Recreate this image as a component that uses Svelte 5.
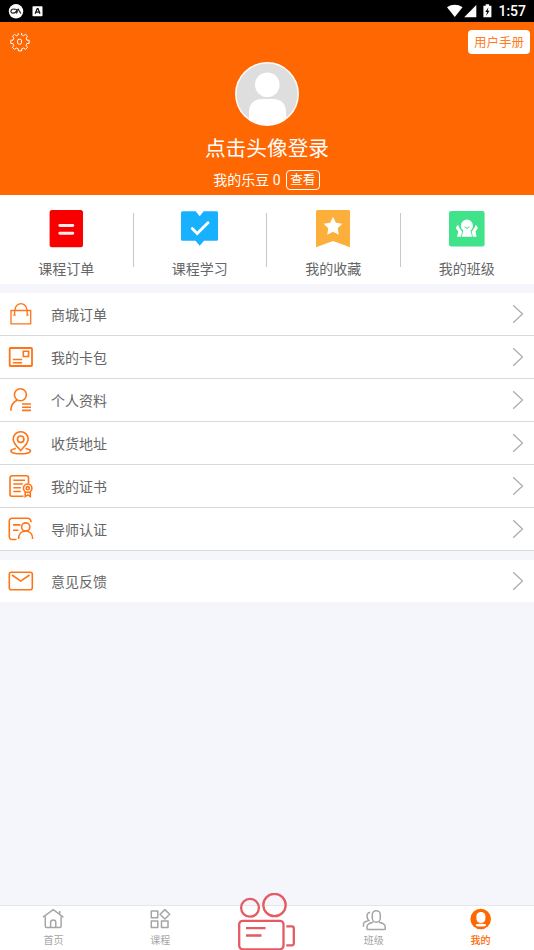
<script lang="ts">
	const shortcuts = [
		{ icon: 'order', label: '课程订单' },
		{ icon: 'study', label: '课程学习' },
		{ icon: 'favorite', label: '我的收藏' },
		{ icon: 'group', label: '我的班级' }
	];

	const sections = [
		[
			{ icon: 'bag', label: '商城订单' },
			{ icon: 'card', label: '我的卡包' },
			{ icon: 'profile', label: '个人资料' },
			{ icon: 'pin', label: '收货地址' },
			{ icon: 'certificate', label: '我的证书' },
			{ icon: 'teacher', label: '导师认证' }
		],
		[{ icon: 'mail', label: '意见反馈' }]
	];

	const tabs = [
		{ icon: 'home', label: '首页' },
		{ icon: 'course', label: '课程' },
		{ icon: 'camera', label: '' },
		{ icon: 'class', label: '班级' },
		{ icon: 'mine', label: '我的' }
	];

	let activeTab = $state('mine');
</script>

<div class="screen">
	<div class="statusbar">
		<svg width="36" height="16" viewBox="0 0 36 16">
			<circle cx="8" cy="8.3" r="7.2" fill="#fff" />
			<path d="M7 6.4C4.5 5.3 2.7 6.8 2.9 8.5c.2 1.9 2.8 2.2 4.5.7l2.8-3 2.7 4.3M7.2 6.4c2.2-.6 3 3.7.7 3.7" fill="none" stroke="#222" stroke-width="1.2" />
			<rect x="24.5" y="3.3" width="10" height="10" rx=".7" fill="#fff" />
			<path d="M27.2 10.8l2-5.2h.8l2 5.2M28 9.1h3.1" fill="none" stroke="#111" stroke-width="1.3" />
		</svg>
		<div class="status_right">
			<svg width="46" height="16" viewBox="0 0 46 16">
				<path d="M0 4.3C4.6 1 10.9 1 15.500 4.300L7.800 14z" fill="#fff" />
				<path d="M29.300 2v12.200H17.200z" fill="#fff" />
				<path d="M38.700 1.300h3.400v1.400h2.300v11.600h-8V2.700h2.300z" fill="#fff" />
				<path d="M41.500 4.200l-3.200 4.700h1.800l-1 4 3.400-5.100h-1.900l.9-3.600z" fill="#000" />
			</svg>
			<span>1:57</span>
		</div>
	</div>

	<header>
		<div class="header_top">
			<svg width="20" height="20" viewBox="0 0 20 20" fill="none" stroke="#fff" stroke-width="1">
				<path d="M8.300 1v1.900l-2 .9-1.800-1.500-2 2 1.400 1.900-.9 2H.8v3.300h2.100l1 2.100-1.400 1.800 2 2 1.800-1.400 2 .9v2h3.300v-2l2-.9 1.800 1.400 2.100-2-1.400-1.800.8-2.100h2.200V8.200h-2.200l-.8-2 1.400-1.900-2.100-2-1.800 1.500-2-.9V1" />
				<rect x="7.500" y="7.200" width="4" height="5" rx="1.600" />
			</svg>
			<button class="manual">用户手册</button>
		</div>
		<svg width="64" height="64" viewBox="0 0 64 64">
			<clipPath id="avatar-clip"><circle cx="32" cy="32" r="31" /></clipPath>
			<circle cx="32" cy="32" r="31" fill="#dedede" />
			<g clip-path="url(#avatar-clip)" fill="#fff">
				<circle cx="32.300" cy="22.700" r="12.300" />
				<path d="M14 64V50c0-8 5-13 13-13h11c8 0 13 5 13 13v14z" />
			</g>
			<circle cx="32" cy="32" r="31.200" fill="none" stroke="#fff" stroke-width="1.500" />
		</svg>
		<div class="login">点击头像登录</div>
		<div class="beans">
			<span>我的乐豆 0</span>
			<button class="view">查看</button>
		</div>
	</header>

	<div class="shortcuts">
		{#each shortcuts as item}
			<div class="shortcut">
				<svg width="38" height="38" viewBox="0 0 38 38">
					{#if item.icon === 'order'}
						<rect x="1.600" y="0" width="33.400" height="37.300" rx="2.500" fill="#f80000" />
						<path d="M11.800 15.500h13M11.800 23.200h13" stroke="#ffe9e9" stroke-width="2.900" stroke-linecap="round" />
					{:else if item.icon === 'study'}
						<path d="M2 1.300h12.700l4 5 4-5h13.100q1.200 0 1.200 1.500v26.400q0 1.600-1.400 1.600H23l-4.300 5-4.200-5H1.400Q0 30.800 0 29.200V2.800Q0 1.300 2 1.300z" fill="#18b1ff" />
						<path d="M11.200 18.500l5 5L27 12.700" fill="none" stroke="#fff" stroke-width="2.900" stroke-linecap="round" />
					{:else if item.icon === 'favorite'}
						<path d="M2.600 0h30.800q1.600 0 1.600 1.600v35.700L18 31 1 37.300V1.600Q1 0 2.600 0z" fill="#fdaf3b" />
						<path d="M18 6.800l2.900 6 6.400.9-4.600 4.600 1.100 6.500-5.800-3-5.800 3 1.100-6.500-4.600-4.600 6.400-.9z" fill="#fff" />
					{:else}
						<rect x="1" y="1" width="35.600" height="35.400" rx="2.200" fill="#40e28a" />
						<path d="M10.300 15c-2.300 1-3 3.700-1.100 5 1.600 1.100.9 3-.2 6.800h4l1.100-5.300c-1.900-2-2.900-3.700-3.800-6.500zM27.500 15c2.300 1 3 3.700 1.100 5-1.600 1.100-.9 3 .2 6.800h-4l-1.100-5.300c1.900-2 2.900-3.700 3.800-6.500z" fill="#fff" />
						<path d="M15.200 20.500h7.400l1.500 6.300H13.800z" fill="#fff" />
						<circle cx="18.900" cy="15.700" r="6.100" fill="#fff" />
						<path d="M16.900 17q2 2.400 4 0" fill="none" stroke="#40e28a" stroke-width="1.100" stroke-linecap="round" />
					{/if}
				</svg>
				<span>{item.label}</span>
			</div>
		{/each}
	</div>

	{#each sections as rows}
		<div class="section">
			{#each rows as row}
				<div class="row">
					<svg class="row_icon" width="26" height="26" viewBox="0 0 26 26">
						{#if row.icon === 'bag'}
							<path d="M3 9.500h19.700v13.300H3zM6.500 13.500C6.500 6.500 8.500 2.700 12.900 2.700s6.500 3.800 6.500 10.800" stroke-width="1.300" />
							<path d="M5.400 14h2.200M18.300 14h2.200" />
						{:else if row.icon === 'card'}
							<rect x="1.700" y="4" width="22.300" height="18" rx=".7" stroke-width="1.800" />
							<path d="M15.300 7.300h5.200v5.200h-5.200zM4.800 15.500h9.300M4.800 18.700h9.300" />
						{:else if row.icon === 'profile'}
							<circle cx="12.400" cy="7.700" r="6" />
							<path d="M9.200 13.200C5.600 14.700 3 18.500 2.800 23.800M14 17h9M14 20.200h9M14 23.400h9" />
						{:else if row.icon === 'pin'}
							<path d="M12.700 20.500C9 16.500 5.200 13.200 5.200 9.200a7.500 7.500 0 0 1 15 0c0 4-3.800 7.300-7.500 11.300z" />
							<circle cx="12.700" cy="9.200" r="3.200" />
							<path d="M7.800 18.500C-.2 20 1.800 23.800 12.700 23.800s12.900-3.800 4.900-5.300" />
						{:else if row.icon === 'certificate'}
							<path d="M15.500 23.300H4a2 2 0 0 1-2-2V4.800a2 2 0 0 1 2-2h14.500a2 2 0 0 1 2 2v5.500M5.300 7.200H17M5.300 11h9.500M5.300 14.800h7.500M5.300 18.500h7.500" />
							<circle cx="19.700" cy="15.200" r="4.200" />
							<circle cx="19.700" cy="15.200" r="1.600" />
							<path d="M17.200 18.900v4.700l2.600-1.700 2.500 1.700v-4.700" />
						{:else if row.icon === 'teacher'}
							<path d="M8.500 23.500H4a2.700 2.700 0 0 1-2.700-2.700V5A2.700 2.700 0 0 1 4 2.300h15.500c2.300 0 3.400 1.500 3.600 4M5 8.900h7.500M5 14.300h5.500M10.600 23c0-4.500 2.500-8 7-8s7 3.500 7.100 8" />
							<circle cx="17.700" cy="11" r="4.100" />
						{:else}
							<rect x="1.300" y="4.200" width="23" height="17.500" rx="2" />
							<path d="M4 7l8.700 6.100L21.500 7" />
						{/if}
					</svg>
					<span>{row.label}</span>
					<svg class="chevron" width="12" height="20" viewBox="0 0 12 20">
						<path d="M1.200 1.200l9.300 8.800-9.300 8.800" />
					</svg>
				</div>
			{/each}
		</div>
	{/each}

	<nav>
		{#each tabs as tab}
			<button class="tab" class:active={activeTab === tab.icon} onclick={() => (activeTab = tab.icon)}>
				{#if tab.icon === 'camera'}
					<svg class="camera" width="58" height="58" viewBox="0 0 58 58">
						<circle cx="12" cy="14.800" r="8.900" />
						<circle cx="36.500" cy="12" r="11.200" />
						<rect x="1.200" y="27.800" width="44.300" height="28.500" rx="3.500" />
						<path d="M8 35.200h19.500M8 42.500h15.500M48.300 33.300h5.500q2 0 2 2v15q0 2-2 2h-5.500" />
					</svg>
				{:else}
					<svg width="26" height="24" viewBox="0 0 26 24">
						{#if tab.icon === 'home'}
							<path d="M3 10.200L13.200 2.600l10.200 7.600M5.300 9.500v9.700q0 1.300 1.300 1.300h13.200q1.300 0 1.300-1.300V9.500M19.700 4v3.500M10.600 20.200v-4.700a2.600 2.600 0 0 1 5.200 0v4.700" />
						{:else if tab.icon === 'course'}
							<path d="M4.300 4h6.500v6.700H4.300zM4.300 14h6.500v6.500H4.300zM14.500 14H21v6.500h-6.500zM17.900 2.600l4.800 4.700-4.800 4.700-4.800-4.700z" stroke-linejoin="round" />
						{:else if tab.icon === 'class'}
							<rect x="11.300" y="3.700" width="8" height="11.500" rx="4" />
							<path d="M12.300 15.200c-3.800.8-6.300 2.400-6.300 4.500v2q0 .9.900.9h16.400q.9 0 .9-.9v-2c0-2.100-2.500-3.700-6.300-4.500M9.200 5.200C6.300 5.500 5.800 8 6.200 10.300c.2 1.600.9 2.500 1.600 3.200-3 .8-5.300 1.600-5.300 3.500v2.700" />
						{:else}
							<circle class="mine_disc" cx="12.700" cy="12" r="10.300" />
							<rect class="mine_person" x="8.400" y="5" width="9" height="11" rx="4.200" />
							<ellipse class="mine_person" cx="12.900" cy="18.200" rx="5.200" ry="1.400" />
						{/if}
					</svg>
					<span>{tab.label}</span>
				{/if}
			</button>
		{/each}
	</nav>
</div>

<style>
	:global(body) {
		margin: 0;
	}

	.screen {
		display: flex;
		flex-direction: column;
		height: 950px;
		overflow: hidden;
		background: #f5f6fb;
		color: #666;
		font-family: Roboto, 'Noto Sans CJK SC', sans-serif;
		font-size: 14px;
	}

	svg {
		display: block;
		flex-shrink: 0;
	}

	button {
		padding: 0;
		border: none;
		background: none;
		font-family: inherit;
	}

	.statusbar {
		display: flex;
		justify-content: space-between;
		align-items: center;
		height: 22px;
		padding: 0 8px;
		background: #000;
		color: #fff;
	}

	.status_right {
		display: flex;
		align-items: center;
		gap: 5px;
		font-size: 14px;
		font-weight: 500;
	}

	header {
		display: flex;
		flex-direction: column;
		align-items: center;
		height: 173px;
		background: #ff6702;
		color: #fff;
	}

	.header_top {
		display: flex;
		justify-content: space-between;
		align-self: stretch;
		height: 31.5px;
		padding: 8px 4px 0 10px;
	}

	.header_top svg {
		margin-top: 2px;
	}

	.manual {
		width: 62px;
		height: 24px;
		border-radius: 4px;
		background: #fff;
		color: #ff7d26;
		font-size: 12.5px;
		line-height: 25px;
	}

	.login {
		margin-top: 8.5px;
		font-size: 20.7px;
		line-height: 30px;
	}

	.beans {
		display: flex;
		align-items: center;
		gap: 5px;
		margin-top: 6px;
		padding-right: 1px;
		line-height: 20px;
	}

	.view {
		box-sizing: border-box;
		width: 34px;
		height: 20px;
		border: 1px solid #fff;
		border-radius: 4px;
		color: #fff;
		font-size: 12.5px;
		line-height: 18px;
	}

	.shortcuts {
		display: flex;
		height: 89px;
		background: #fff;
	}

	.shortcut {
		display: flex;
		flex: 1;
		flex-direction: column;
		align-items: center;
		padding-top: 15px;
		background: linear-gradient(#c8c8c8, #c8c8c8) no-repeat right 18px / 1px 54px;
	}

	.shortcut:last-child {
		background: none;
	}

	.shortcut span {
		margin: 11px 1px 0 0;
		line-height: 20px;
	}

	.section {
		margin-top: 9px;
		background: #fff;
	}

	.row {
		display: flex;
		align-items: center;
		height: 42px;
		padding: 0 10px 0 8px;
		border-bottom: 1px solid #d9d9d9;
	}

	.section:last-of-type .row {
		border-bottom: none;
	}

	.row span {
		flex: 1;
		margin-left: 17px;
		padding-bottom: 1px;
	}

	.row_icon {
		fill: none;
		stroke: #ff7417;
		stroke-width: 1.6;
	}

	.chevron {
		fill: none;
		stroke: #aaa;
		stroke-width: 1.2;
	}

	nav {
		display: flex;
		height: 44px;
		margin-top: auto;
		border-top: 1px solid #e6e6e6;
		background: #fff;
	}

	.tab {
		display: flex;
		flex: 1;
		flex-direction: column;
		align-items: center;
		padding-top: 1px;
		color: #a5a5a5;
		font-size: 10px;
	}

	.tab svg {
		fill: none;
		stroke: #a5a5a5;
		stroke-width: 1.5;
	}

	.tab .mine_disc {
		fill: #ff6702;
		stroke: none;
	}

	.tab .mine_person {
		fill: #fff;
		stroke: none;
	}

	.tab span {
		margin-top: 3px;
		line-height: 14px;
	}

	.tab.active {
		color: #ff6702;
		font-weight: 500;
	}

	.tab .camera {
		margin-top: -14px;
		stroke: #e45b63;
		stroke-width: 2.3;
	}
</style>
